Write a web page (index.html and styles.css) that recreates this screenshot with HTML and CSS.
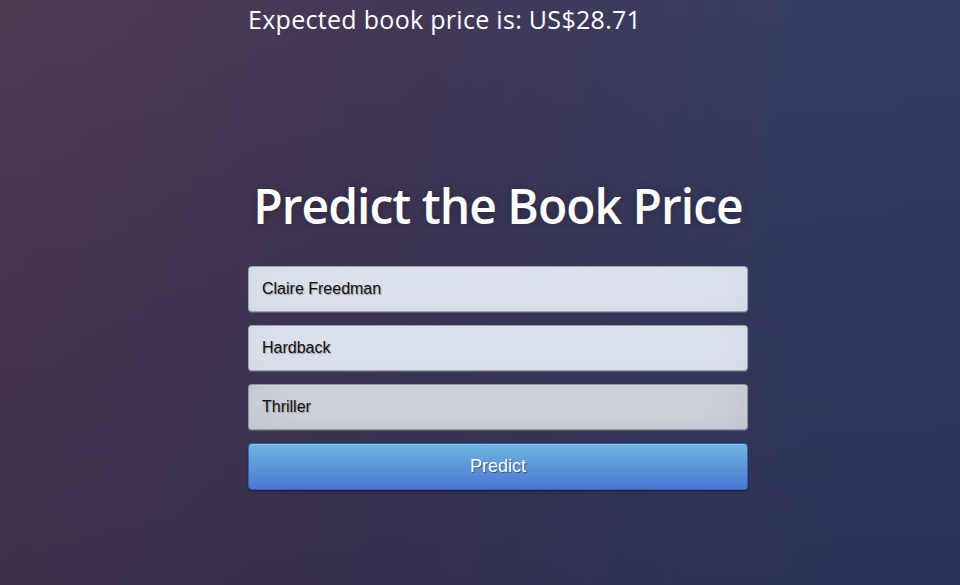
FILE: index.html
```html
<!DOCTYPE html>
<html>
<head>
<meta charset="utf-8">
<link rel="stylesheet" href="styles.css">
</head>
<body>
<div class="page">
  <div class="result">Expected book price is: US$28.71</div>
  <div class="login">
    <h1 class="title">Predict the Book Price</h1>
    <form class="form">
      <input class="field" type="text" value="Claire Freedman">
      <input class="field" type="text" value="Hardback">
      <input class="field field-alt" type="text" value="Thriller">
      <button class="btn" type="button">Predict</button>
    </form>
  </div>
</div>
</body>
</html>
```
FILE: styles.css
```css
html, body {
  margin: 0;
  padding: 0;
  width: 100%;
  height: 100%;
}
body {
  font-family: "Open Sans", sans-serif;
  background:
    linear-gradient(to bottom, rgba(16,16,48,0) 0%, rgba(16,16,48,0.25) 100%),
    linear-gradient(100deg, #4f3a55 0%, #423857 40%, #373d62 75%, #333d63 100%);
  overflow: hidden;
}
.page {
  width: 500px;
  margin-left: 248px;
  display: flex;
  flex-direction: column;
}
.result {
  color: #fff;
  font-size: 25px;
  line-height: 34px;
  margin-top: 2px;
  letter-spacing: 0.3px;
  white-space: nowrap;
}
.login {
  margin-top: 140px;
  display: flex;
  flex-direction: column;
}
.title {
  margin: 0 0 30px 0;
  color: #fff;
  font-size: 48px;
  font-weight: 600;
  letter-spacing: -1px;
  line-height: 60px;
  text-align: center;
  white-space: nowrap;
  text-shadow: 0 0 10px rgba(0,0,0,0.3);
}
.form {
  display: flex;
  flex-direction: column;
  gap: 13px;
  margin: 0;
}
.field {
  box-sizing: border-box;
  width: 500px;
  height: 46px;
  margin: 0;
  padding: 0 13px;
  font-family: "Liberation Sans", Arial, sans-serif;
  font-size: 16px;
  color: #111;
  text-shadow: 1px 1px 1px rgba(0,0,0,0.3);
  background: #dee4f0;
  border: 1px solid rgba(0,0,0,0.3);
  border-radius: 4px;
  box-shadow: inset 0 -5px 45px rgba(100,100,100,0.08), 0 1px 1px rgba(255,255,255,0.2);
  outline: none;
}
.field-alt {
  background: #d5d9e2;
  box-shadow: inset 0 -5px 45px rgba(100,100,100,0.2), 0 1px 1px rgba(255,255,255,0.2);
}
.btn {
  box-sizing: border-box;
  width: 500px;
  height: 47px;
  margin: 0;
  font-family: "Liberation Sans", Arial, sans-serif;
  font-size: 18px;
  color: #fff;
  text-shadow: 1px 1px 1px rgba(0,0,0,0.4);
  background: linear-gradient(to bottom, #6eb6de, #4a77d4);
  border: 1px solid #3762bc;
  border-radius: 4px;
  box-shadow: inset 0 1px 0 rgba(255,255,255,0.2), 0 1px 2px rgba(0,0,0,0.5);
  cursor: pointer;
}
```
